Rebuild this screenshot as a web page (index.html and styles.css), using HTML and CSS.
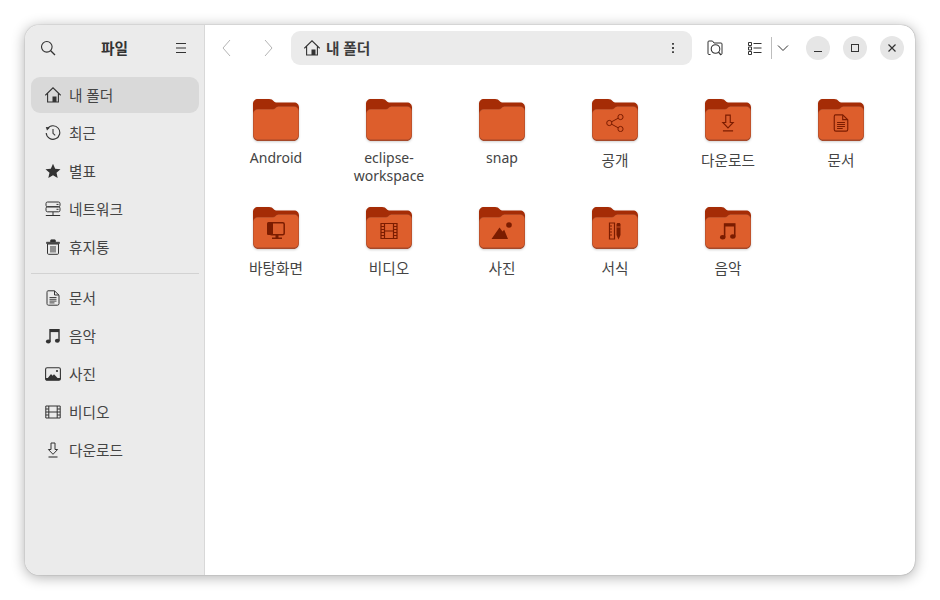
FILE: index.html
```html
<!DOCTYPE html>
<html lang="ko">
<head>
    <meta charset="UTF-8">
    <title>파일</title>
    <link rel="stylesheet" href="styles.css">
</head>
<body>
    <svg class="defs" width="0" height="0">
        <symbol id="i-search" viewBox="0 0 16 16"><circle cx="6.8" cy="6.8" r="5.3" fill="none" stroke="currentColor" stroke-width="1.1"/><path d="M10.7 10.7l4.3 4.3" stroke="currentColor" stroke-width="1.3"/></symbol>
        <symbol id="i-menu" viewBox="0 0 16 16"><path d="M3 3.500h10M3 8h10M3 12.500h10" stroke="currentColor" stroke-width="1.1"/></symbol>
        <symbol id="i-home" viewBox="0 0 16 16"><path d="M.3 8.300L8 .8l7.700 7.500M2.600 6.400V15h10.800V6.400" fill="none" stroke="currentColor" stroke-width="1.100"/><path d="M7.500 9.500h4V15h-4z" fill="currentColor"/></symbol>
        <symbol id="i-recent" viewBox="0 0 16 16"><path d="M2.300 3.800A6.800 6.800 0 1 1 1.200 8" fill="none" stroke="currentColor" stroke-width="1.100"/><path d="M.8 2l4.200.4L2 5.600z" fill="currentColor"/><path d="M8 4v4.300l2.200 2" fill="none" stroke="currentColor" stroke-width="1.100"/></symbol>
        <symbol id="i-star" viewBox="0 0 16 16"><path d="M8 .8l2.200 4.900 5.300.5-4 3.500 1.200 5.200L8 12.200l-4.700 2.700 1.200-5.200-4-3.500 5.300-.5z" fill="currentColor"/></symbol>
        <symbol id="i-network" viewBox="0 0 16 16"><rect x="1" y="1" width="14" height="4.800" rx="1.500" fill="none" stroke="currentColor" stroke-width="1"/><rect x="1" y="5.800" width="14" height="5" rx="1.500" fill="none" stroke="currentColor" stroke-width="1"/><path d="M0.800 14.500h14.400M8 11v3.500" stroke="currentColor" stroke-width="1"/><path d="M11.500 3.400h2M11.500 8.300h2" stroke="currentColor" stroke-width="1"/></symbol>
        <symbol id="i-trash" viewBox="0 0 16 16"><path d="M2.500 5v9.300c0 .6.400 1 1 1h9c.6 0 1-.4 1-1V5zM6 7v6.500M8 7v6.500M10 7v6.500" fill="none" stroke="currentColor" stroke-width="1"/><path d="M1.500 3.200h13v1.300h-13zM5.500 3V1.500c0-.5.300-.8.800-.8h3.400c.5 0 .8.300.8.800V3" fill="currentColor" stroke="currentColor" stroke-width=".6"/></symbol>
        <symbol id="i-doc" viewBox="0 0 16 16"><path d="M3 .8h6.500L14 5.200v8.500c0 .9-.6 1.500-1.500 1.500h-9c-.9 0-1.500-.6-1.500-1.500V2.300C2 1.400 2.400.8 3 .8z" fill="none" stroke="currentColor" stroke-width="1"/><path d="M9.500 1v4h4.300" fill="none" stroke="currentColor" stroke-width="1"/><path d="M4.500 7.500h7M4.500 9.300h7M4.500 11.100h7M4.500 12.900h5" stroke="currentColor" stroke-width=".9"/></symbol>
        <symbol id="i-music" viewBox="0 0 16 16"><path d="M5 13.500V1.800h9v11" fill="none" stroke="currentColor" stroke-width="1.400"/><path d="M5 1.500h9v2.600H5z" fill="currentColor"/><ellipse cx="3.300" cy="13.500" rx="2.400" ry="2" fill="currentColor"/><ellipse cx="12.300" cy="12.800" rx="2.400" ry="2" fill="currentColor"/></symbol>
        <symbol id="i-photo" viewBox="0 0 16 16"><rect x=".6" y="1.800" width="14.800" height="12.400" rx="1.500" fill="none" stroke="currentColor" stroke-width="1.100"/><path d="M.6 12h14.800v1c0 .8-.5 1.200-1.200 1.200H1.800c-.7 0-1.200-.4-1.200-1.200z" fill="currentColor"/><path d="M2.800 12l3.200-4 1.600 1.700L9 8.200l3.600 3.800z" fill="currentColor"/><circle cx="12" cy="5" r="1.100" fill="currentColor"/></symbol>
        <symbol id="i-video" viewBox="0 0 16 16"><path d="M.8 2h14.400v12H.8zM3.800 2v12M12.200 2v12M3.800 8h8.400M.8 5h3M.8 8h3M.8 11h3M12.200 5h3M12.200 8h3M12.200 11h3" fill="none" stroke="currentColor" stroke-width="1"/></symbol>
        <symbol id="i-download" viewBox="0 0 16 16"><path d="M6 1h4v6.500h2.600L8 12.300 3.400 7.500H6z" fill="none" stroke="currentColor" stroke-width="1"/><path d="M3.500 15h9" stroke="currentColor" stroke-width="1.100"/></symbol>
        <symbol id="i-share" viewBox="0 0 18 18"><circle cx="3.300" cy="9" r="2.600" fill="none" stroke="currentColor" stroke-width="1"/><circle cx="14.500" cy="3" r="2.600" fill="none" stroke="currentColor" stroke-width="1"/><circle cx="14.500" cy="15" r="2.600" fill="none" stroke="currentColor" stroke-width="1"/><path d="M5.600 7.800l6.600-3.600M5.600 10.200l6.600 3.600" stroke="currentColor" stroke-width="1"/></symbol>
        <symbol id="i-desktop" viewBox="0 0 18 18"><path d="M0 1.500C0 .8.500 0 1.500 0H6v13H1.500C.5 13 0 12.500 0 11.500z" fill="currentColor"/><rect x="3" y=".8" width="14.200" height="12" rx="1.500" fill="none" stroke="currentColor" stroke-width="1.500"/><path d="M8.500 13h3v2.500h-3zM5 15.500h10V17H5z" fill="currentColor"/></symbol>
        <symbol id="i-film" viewBox="0 0 18 18"><path d="M1 1.500h16v15H1zM4.500 1.500v15M13.500 1.500v15M4.500 9h9" fill="none" stroke="currentColor" stroke-width="1.200"/><path d="M1 4.500h3.500M1 7.500h3.500M1 10.500h3.500M1 13.500h3.500M13.500 4.500H17M13.500 7.500H17M13.500 10.500H17M13.500 13.500H17" stroke="currentColor" stroke-width="1"/></symbol>
        <symbol id="i-mountain" viewBox="0 0 22 18"><path d="M.5 17L8.500 5.500l3 4 1.700-1.700L17 17z" fill="currentColor"/><circle cx="18" cy="3" r="2.800" fill="currentColor"/></symbol>
        <symbol id="i-template" viewBox="0 0 18 18"><path d="M3.500 1h5v16h-5zM3.500 4h2.500M3.500 7h2.500M3.500 10h2.500M3.500 13h2.500" fill="none" stroke="currentColor" stroke-width="1.200"/><path d="M10.500 2.500c0-.8.500-1.500 1.500-1.500h1c1 0 1.500.7 1.500 1.500v10.500l-2 4.500-2-4.500z" fill="currentColor"/><path d="M10.500 5h4" stroke="#dd5e2c" stroke-width=".8"/></symbol>
        <symbol id="i-folder" viewBox="0 0 46 42">
            <path d="M5 0h11c2.500 0 3.500.8 4.500 2s2 1.500 4 1.500H41c3 0 5 2 5 5V20H0V5c0-3 2-5 5-5z" fill="#a52c06"/>
            <path d="M0 15c0-3 2-5 5-5h13.500c2 0 3-.3 4-1.300s2-1.500 4-1.500H41c3 0 5 2 5 5V36c0 3.500-2 6-5.500 6h-35C2 42 0 39.500 0 36z" fill="#a5492a"/>
            <path d="M.5 15c0-3 2-4.600 4.500-4.600h13.500c2.200 0 3.200-.5 4.300-1.500s1.700-1.200 3.700-1.200H41c2.500 0 4.500 1.800 4.500 4.300V35.500c0 3-2 5-4.700 5H5.200c-2.700 0-4.700-2-4.700-5z" fill="#dd5e2c"/>
        </symbol>
    </svg>

    <div class="window">
        <aside class="sidebar">
            <div class="side-head">
                <svg class="ico"><use href="#i-search"/></svg>
                <span class="side-title">파일</span>
                <svg class="ico"><use href="#i-menu"/></svg>
            </div>
            <nav class="side-list">
                <div class="side-item active"><svg class="ico"><use href="#i-home"/></svg><span class="side-label">내 폴더</span></div>
                <div class="side-item"><svg class="ico"><use href="#i-recent"/></svg><span class="side-label">최근</span></div>
                <div class="side-item"><svg class="ico"><use href="#i-star"/></svg><span class="side-label">별표</span></div>
                <div class="side-item"><svg class="ico"><use href="#i-network"/></svg><span class="side-label">네트워크</span></div>
                <div class="side-item"><svg class="ico"><use href="#i-trash"/></svg><span class="side-label">휴지통</span></div>
                <div class="side-sep"></div>
                <div class="side-item"><svg class="ico"><use href="#i-doc"/></svg><span class="side-label">문서</span></div>
                <div class="side-item"><svg class="ico"><use href="#i-music"/></svg><span class="side-label">음악</span></div>
                <div class="side-item"><svg class="ico"><use href="#i-photo"/></svg><span class="side-label">사진</span></div>
                <div class="side-item"><svg class="ico"><use href="#i-video"/></svg><span class="side-label">비디오</span></div>
                <div class="side-item"><svg class="ico"><use href="#i-download"/></svg><span class="side-label">다운로드</span></div>
            </nav>
        </aside>

        <main class="content">
            <header class="toolbar">
                <div class="nav-btn dim">
                    <svg class="ico" viewBox="0 0 16 16"><path d="M11 0L4 8l7 8" fill="none" stroke="currentColor" stroke-width="1"/></svg>
                </div>
                <div class="nav-btn dim">
                    <svg class="ico" viewBox="0 0 16 16"><path d="M5 0l7 8-7 8" fill="none" stroke="currentColor" stroke-width="1"/></svg>
                </div>
                <div class="pathbar">
                    <svg class="ico"><use href="#i-home"/></svg>
                    <span class="path-text">내 폴더</span>
                    <svg class="ico path-more" viewBox="0 0 16 16"><path d="M8 3v1.800M8 7.100v1.800M8 11.200V13" stroke="currentColor" stroke-width="1.800"/></svg>
                </div>
                <div class="nav-btn">
                    <svg class="ico" viewBox="0 0 16 16"><path d="M3.500 14.500H2c-.7 0-1-.4-1-1V2c0-.7.300-1 1-1h3.500l1.500 2h7c.7 0 1 .3 1 1v9.500c0 .6-.3 1-1 1" fill="none" stroke="currentColor" stroke-width="1"/><circle cx="8.500" cy="9" r="4.300" fill="none" stroke="currentColor" stroke-width="1.100"/><path d="M11.500 12.200l2.500 2.800" stroke="currentColor" stroke-width="1.200"/></svg>
                </div>
                <div class="view-group">
                    <div class="nav-btn">
                        <svg class="ico" viewBox="0 0 16 16"><path d="M1.500 2.500h3v3h-3zM1.500 7h3v3h-3zM1.500 11.500h3v3h-3z" fill="none" stroke="currentColor" stroke-width="1"/><path d="M6.500 3.500h8M6.500 8h8M6.500 12.500h8" stroke="currentColor" stroke-width="1"/></svg>
                    </div>
                    <div class="view-sep"></div>
                    <div class="view-arrow">
                        <svg class="ico" viewBox="0 0 16 16"><path d="M3 5.500l5 5 5-5" fill="none" stroke="currentColor" stroke-width="1"/></svg>
                    </div>
                </div>
                <div class="win-btns">
                    <div class="win-btn"><svg class="ico-sm" viewBox="0 0 12 12"><path d="M2 9.500h8" stroke="currentColor" stroke-width="1"/></svg></div>
                    <div class="win-btn"><svg class="ico-sm" viewBox="0 0 12 12"><rect x="2.500" y="2.500" width="7" height="7" fill="none" stroke="currentColor" stroke-width="1"/></svg></div>
                    <div class="win-btn"><svg class="ico-sm" viewBox="0 0 12 12"><path d="M2.500 2.500l7 7M9.500 2.500l-7 7" stroke="currentColor" stroke-width="1.200"/></svg></div>
                </div>
            </header>

            <section class="files">
                <div class="file">
                    <div class="folder"><svg class="folder-bg"><use href="#i-folder"/></svg></div>
                    <span class="file-name">Android</span>
                </div>
                <div class="file">
                    <div class="folder"><svg class="folder-bg"><use href="#i-folder"/></svg></div>
                    <span class="file-name">eclipse-<br>workspace</span>
                </div>
                <div class="file">
                    <div class="folder"><svg class="folder-bg"><use href="#i-folder"/></svg></div>
                    <span class="file-name">snap</span>
                </div>
                <div class="file">
                    <div class="folder"><svg class="folder-bg"><use href="#i-folder"/></svg><svg class="emblem"><use href="#i-share"/></svg></div>
                    <span class="file-name ko">공개</span>
                </div>
                <div class="file">
                    <div class="folder"><svg class="folder-bg"><use href="#i-folder"/></svg><svg class="emblem"><use href="#i-download"/></svg></div>
                    <span class="file-name ko">다운로드</span>
                </div>
                <div class="file">
                    <div class="folder"><svg class="folder-bg"><use href="#i-folder"/></svg><svg class="emblem"><use href="#i-doc"/></svg></div>
                    <span class="file-name ko">문서</span>
                </div>
                <div class="file">
                    <div class="folder"><svg class="folder-bg"><use href="#i-folder"/></svg><svg class="emblem"><use href="#i-desktop"/></svg></div>
                    <span class="file-name ko">바탕화면</span>
                </div>
                <div class="file">
                    <div class="folder"><svg class="folder-bg"><use href="#i-folder"/></svg><svg class="emblem"><use href="#i-film"/></svg></div>
                    <span class="file-name ko">비디오</span>
                </div>
                <div class="file">
                    <div class="folder"><svg class="folder-bg"><use href="#i-folder"/></svg><svg class="emblem wide"><use href="#i-mountain"/></svg></div>
                    <span class="file-name ko">사진</span>
                </div>
                <div class="file">
                    <div class="folder"><svg class="folder-bg"><use href="#i-folder"/></svg><svg class="emblem"><use href="#i-template"/></svg></div>
                    <span class="file-name ko">서식</span>
                </div>
                <div class="file">
                    <div class="folder"><svg class="folder-bg"><use href="#i-folder"/></svg><svg class="emblem"><use href="#i-music"/></svg></div>
                    <span class="file-name ko">음악</span>
                </div>
            </section>
        </main>
    </div>
</body>
</html>
```

FILE: styles.css
```css
html, body {
    margin: 0;
    height: 100%;
}
body {
    background-color: #fff;
    font-family: "Noto Sans", "Noto Sans CJK KR", sans-serif;
    font-size: 14.67px;
    color: #444;
    padding: 25px;
    box-sizing: border-box;
    overflow: hidden;
}
.defs {
    position: absolute;
}
.window {
    display: flex;
    width: 890px;
    height: 550px;
    background-color: #fff;
    border-radius: 14px;
    overflow: hidden;
    box-shadow: 0 0 1px rgba(0, 0, 0, 0.5), 0 2px 14px rgba(0, 0, 0, 0.33);
}
.ico {
    width: 16px;
    height: 16px;
    flex: none;
    color: #333;
}
.ico-sm {
    width: 12px;
    height: 12px;
    color: #333;
}

/* sidebar */
.sidebar {
    width: 180px;
    flex: none;
    box-sizing: border-box;
    background-color: #ebebeb;
    border-right: 1px solid #d8d8d8;
}
.side-head {
    display: flex;
    align-items: center;
    justify-content: space-between;
    height: 46px;
    padding: 0 15px;
    margin-bottom: 6px;
}
.side-title {
    font-weight: 700;
    color: #333;
    margin-bottom: 2px;
}
.side-list {
    padding: 0 5px 0 6px;
}
.side-item {
    display: flex;
    align-items: center;
    gap: 8px;
    height: 36px;
    margin-bottom: 2px;
    padding-left: 14px;
    border-radius: 9px;
}
.side-item.active {
    background-color: #d9d9d9;
}
.side-label {
    margin-bottom: 2px;
}
.side-sep {
    height: 1px;
    margin: 8px 0 6px;
    background-color: #d2d2d2;
}

/* toolbar */
.content {
    flex: 1;
}
.toolbar {
    display: flex;
    align-items: center;
    height: 46px;
    padding: 0 11px 0 5px;
}
.nav-btn {
    display: flex;
    align-items: center;
    justify-content: center;
    width: 34px;
    height: 34px;
    flex: none;
    margin-right: 7px;
}
.nav-btn.dim .ico {
    color: #b4b4b4;
}
.pathbar {
    display: flex;
    align-items: center;
    gap: 6px;
    flex: 1;
    height: 34px;
    margin: 0 6px 0 -1px;
    padding: 0 11px 0 13px;
    background-color: #ebebeb;
    border-radius: 9px;
}
.path-text {
    flex: 1;
    font-weight: 700;
    color: #3d3d3d;
    margin-bottom: 2px;
}
.view-group {
    display: flex;
    align-items: center;
    margin-left: -1px;
}
.view-group .nav-btn {
    margin-right: -1px;
}
.view-sep {
    width: 1px;
    height: 22px;
    background-color: #bdbdbd;
}
.view-arrow {
    display: flex;
    justify-content: center;
    width: 22px;
}
.win-btns {
    display: flex;
    gap: 13px;
    margin-left: 12px;
}
.win-btn {
    display: flex;
    align-items: center;
    justify-content: center;
    width: 24px;
    height: 24px;
    background-color: #e6e6e6;
    border-radius: 50%;
}

/* files */
.files {
    display: grid;
    grid-template-columns: repeat(6, 113px);
    grid-auto-rows: 108px;
    padding: 28px 0 0 14.5px;
}
.file {
    display: flex;
    flex-direction: column;
    align-items: center;
}
.folder {
    position: relative;
    display: flex;
    width: 46px;
    height: 42px;
    margin-bottom: 8px;
}
.folder-bg {
    width: 46px;
    height: 42px;
    filter: drop-shadow(0 1px 1px rgba(0, 0, 0, 0.18));
}
.emblem {
    position: absolute;
    left: 14px;
    top: 15px;
    width: 18px;
    height: 18px;
    color: #7b1c00;
}
.emblem.wide {
    left: 12px;
    width: 22px;
}
.file-name {
    font-size: 14px;
    text-align: center;
    line-height: 18px;
}
.file-name.ko {
    font-size: 14.67px;
    padding-top: 2px;
}
```
